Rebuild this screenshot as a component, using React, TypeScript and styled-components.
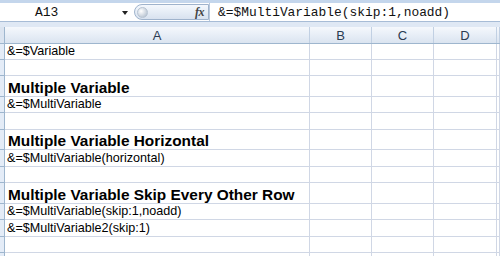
import React from "react";
import styled, { createGlobalStyle } from "styled-components";

const Global = createGlobalStyle`
  html, body { margin: 0; padding: 0; background: #ffffff; }
  body { width: 500px; height: 256px; overflow: hidden; font-family: "Liberation Sans", Arial, sans-serif; }
  * { box-sizing: border-box; }
`;

const Page = styled.div`
  width: 500px;
  height: 256px;
  overflow: hidden;
  display: flex;
  flex-direction: column;
  background: #ffffff;
`;

const TopBand = styled.div`
  height: 3px;
  background: #c4d6ec;
  flex: none;
`;

const FormulaBar = styled.div`
  height: 19px;
  flex: none;
  display: flex;
  align-items: stretch;
  background: #ffffff;
  border-bottom: 1px solid #a7bcd6;
`;

const NameBox = styled.div`
  width: 134px;
  display: flex;
  align-items: center;
  position: relative;
  font-family: "Liberation Mono", "Courier New", monospace;
  font-size: 13px;
  color: #111;
`;

const NameText = styled.span`
  padding-left: 35px;
`;

const DropArrow = styled.span`
  position: absolute;
  left: 122px;
  top: 8px;
  width: 0;
  height: 0;
  border-left: 3px solid transparent;
  border-right: 3px solid transparent;
  border-top: 4px solid #222;
`;

const FxPill = styled.div`
  width: 75px;
  margin: 1px 0 1px 0;
  border: 1px solid #9fb3cc;
  border-radius: 9px 0 0 9px;
  background: linear-gradient(#f4f8fd, #d8e2ef);
  display: flex;
  align-items: center;
  justify-content: space-between;
  padding: 0 4px 0 2px;
`;

const Knob = styled.span`
  width: 11px;
  height: 11px;
  border-radius: 50%;
  background: radial-gradient(circle at 35% 35%, #ffffff, #a9b7c8);
  border: 1px solid #b7c3d2;
`;

const Fx = styled.span`
  font-family: "Liberation Serif", "Times New Roman", serif;
  font-style: italic;
  font-weight: bold;
  font-size: 12px;
  color: #444;
  letter-spacing: -0.5px;
`;

const FormulaInput = styled.div`
  flex: 1;
  display: flex;
  align-items: center;
  padding-left: 8px;
  border-left: 1px solid #b9c9dd;
  font-family: "Liberation Mono", "Courier New", monospace;
  font-size: 12.9px;
  color: #111;
  white-space: nowrap;
`;

const Gap = styled.div`
  height: 5px;
  flex: none;
  background: #dfe8f4;
`;

const cols = "5px 305px 62px 62px 63px 1fr";

const HeaderRow = styled.div`
  display: grid;
  grid-template-columns: ${cols};
  height: 17px;
  flex: none;
  background: linear-gradient(#f5f8fc 0%, #e6edf6 55%, #dbe4f0 100%);
  border-bottom: 1px solid #9eb6ce;
`;

const HeadCell = styled.div<{ $corner?: boolean }>`
  display: flex;
  align-items: center;
  justify-content: center;
  border-right: 1px solid #c1d0e3;
  font-family: "Liberation Sans", Arial, sans-serif;
  font-size: 13px;
  color: #2a3b52;
  ${(p) => (p.$corner ? "border-right-color: #9eb6ce; background: #dbe4f0;" : "")}
`;

const Row = styled.div<{ $h: number }>`
  display: grid;
  grid-template-columns: ${cols};
  height: ${(p) => p.$h}px;
  flex: none;
`;

const RowHead = styled.div`
  background: #e4ecf7;
  border-right: 1px solid #9eb6ce;
  border-bottom: 1px solid #9eb6ce;
`;

const Cell = styled.div<{ $bold?: boolean }>`
  border-right: 1px solid #d0d7e5;
  border-bottom: 1px solid #d0d7e5;
  display: flex;
  align-items: flex-end;
  padding: 0 0 1px ${(p) => (p.$bold ? "3px" : "2px")};
  white-space: nowrap;
  overflow: visible;
  font-family: "Liberation Sans", Arial, sans-serif;
  font-size: ${(p) => (p.$bold ? "15.4px" : "12.6px")};
  font-weight: ${(p) => (p.$bold ? "bold" : "normal")};
  line-height: 1;
  color: #000;
  position: relative;
  z-index: 1;
`;

const EmptyCell = styled.div`
  border-right: 1px solid #d0d7e5;
  border-bottom: 1px solid #d0d7e5;
`;

const rows: { h: number; text?: string; bold?: boolean }[] = [
  { h: 16, text: "&=$Variable" },
  { h: 16 },
  { h: 21, text: "Multiple Variable", bold: true },
  { h: 16, text: "&=$MultiVariable" },
  { h: 17 },
  { h: 20, text: "Multiple Variable Horizontal", bold: true },
  { h: 17, text: "&=$MultiVariable(horizontal)" },
  { h: 16 },
  { h: 21, text: "Multiple Variable Skip Every Other Row", bold: true },
  { h: 16, text: "&=$MultiVariable(skip:1,noadd)" },
  { h: 17, text: "&=$MultiVariable2(skip:1)" },
  { h: 16 },
  { h: 16 },
];

export default function App() {
  return (
    <Page>
      <Global />
      <TopBand />
      <FormulaBar>
        <NameBox>
          <NameText>A13</NameText>
          <DropArrow />
        </NameBox>
        <FxPill>
          <Knob />
          <Fx>fx</Fx>
        </FxPill>
        <FormulaInput>&amp;=$MultiVariable(skip:1,noadd)</FormulaInput>
      </FormulaBar>
      <Gap />
      <HeaderRow>
        <HeadCell $corner />
        <HeadCell>A</HeadCell>
        <HeadCell>B</HeadCell>
        <HeadCell>C</HeadCell>
        <HeadCell>D</HeadCell>
        <HeadCell />
      </HeaderRow>
      {rows.map((r, i) => (
        <Row key={i} $h={r.h}>
          <RowHead />
          {r.text ? <Cell $bold={r.bold}>{r.text}</Cell> : <EmptyCell />}
          <EmptyCell />
          <EmptyCell />
          <EmptyCell />
          <EmptyCell />
        </Row>
      ))}
    </Page>
  );
}
